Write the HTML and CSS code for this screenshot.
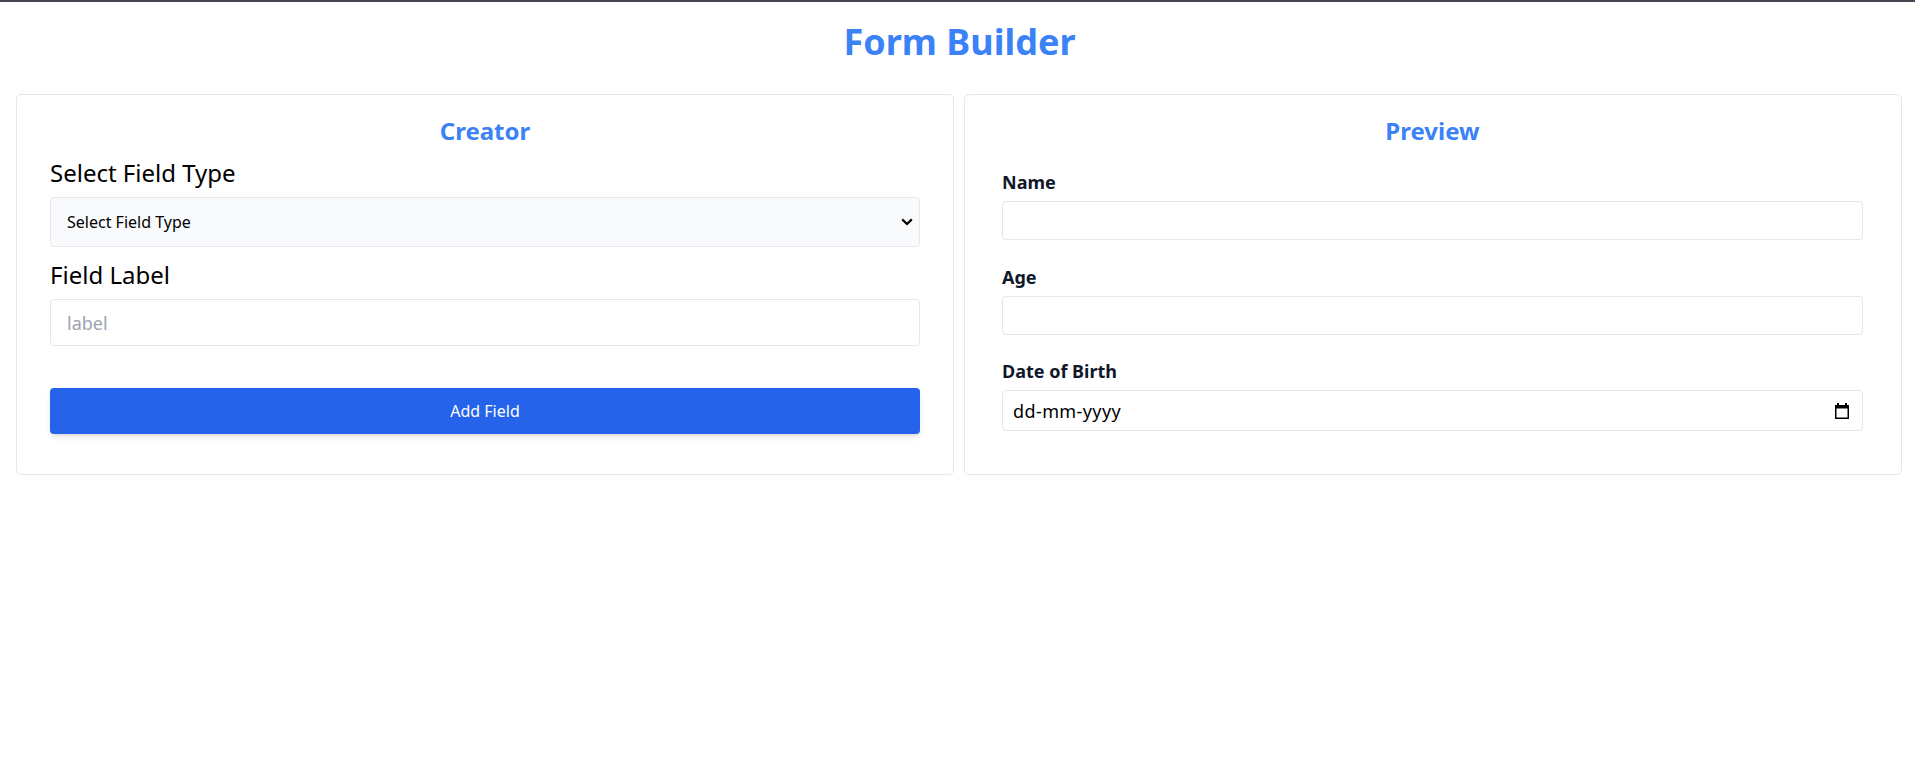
FILE: index.html
```html
<!DOCTYPE html>
<html lang="en">
<head>
<meta charset="utf-8">
<title>Form Builder</title>
<link rel="stylesheet" href="styles.css">
</head>
<body>
<div class="page">
  <h1 class="title">Form Builder</h1>
  <div class="panels">
    <section class="card card-creator">
      <h2 class="card-title">Creator</h2>
      <label class="creator-label" for="ftype">Select Field Type</label>
      <div class="select-wrap">
        <select id="ftype" class="select">
          <option>Select Field Type</option>
          <option>Text</option>
          <option>Number</option>
          <option>Date</option>
        </select>
        <svg class="chevron" width="12" height="8" viewBox="0 0 12 8"><path d="M1.2 1.4 L6 6 L10.8 1.4" fill="none" stroke="#000" stroke-width="2.2"/></svg>
      </div>
      <label class="creator-label" for="flabel">Field Label</label>
      <input id="flabel" class="text-input" type="text" placeholder="label">
      <button class="add-btn" type="button">Add Field</button>
    </section>
    <section class="card card-preview">
      <h2 class="card-title">Preview</h2>
      <div class="preview-list">
        <div class="field">
          <label class="preview-label">Name</label>
          <input class="preview-input" type="text">
        </div>
        <div class="field">
          <label class="preview-label">Age</label>
          <input class="preview-input" type="text">
        </div>
        <div class="field">
          <label class="preview-label">Date of Birth</label>
          <div class="date-field">
            <input class="date-text" type="text" placeholder="dd-mm-yyyy">
            <svg class="cal-icon" width="14" height="16" viewBox="0 0 14 16">
              <rect x="2" y="0" width="2" height="2.5" fill="#000"/>
              <rect x="10" y="0" width="2" height="2.5" fill="#000"/>
              <rect x="0" y="2" width="14" height="3.5" fill="#000"/>
              <rect x="0.75" y="2.75" width="12.5" height="12.5" fill="none" stroke="#000" stroke-width="1.5"/>
            </svg>
          </div>
        </div>
      </div>
    </section>
  </div>
</div>
</body>
</html>
```

FILE: styles.css
```css
* { box-sizing: border-box; }

html, body {
  margin: 0;
  padding: 0;
  background: #ffffff;
}

body {
  font-family: "Noto Sans", "Open Sans", sans-serif;
  color: #000;
}

.page {
  border-top: 2px solid #44474f;
  min-height: 761px;
}

.title {
  margin: 20px 0 32px;
  font-size: 36px;
  line-height: 40px;
  font-weight: 700;
  color: #3b82f6;
  text-align: center;
  padding-left: 4px;
}

.panels {
  display: grid;
  grid-template-columns: 1fr 1fr;
  gap: 10px;
  padding: 0 13px 0 16px;
}

.card {
  border: 1px solid #e5e7eb;
  border-radius: 5px;
  background: #fff;
  display: flex;
  flex-direction: column;
}

.card-creator {
  padding: 20px 33px 39px;
}

.card-preview {
  padding: 20px 38px 20px 37px;
}

.card-title {
  margin: 0 0 10px;
  font-size: 24px;
  line-height: 32px;
  font-weight: 700;
  color: #3b82f6;
  text-align: center;
}

.creator-label {
  display: block;
  font-size: 24px;
  line-height: 32px;
  margin-bottom: 8px;
  color: #000;
}

.select-wrap {
  position: relative;
  margin-bottom: 12px;
}

.select {
  display: block;
  width: 100%;
  height: 50px;
  padding: 0 16px;
  font-family: inherit;
  font-size: 16px;
  color: #000;
  background: #f9fafb;
  border: 1px solid #e5e7eb;
  border-radius: 4px;
  appearance: none;
  -webkit-appearance: none;
  outline: none;
}

.chevron {
  position: absolute;
  right: 7px;
  top: 21px;
  pointer-events: none;
}

.text-input {
  display: block;
  width: 100%;
  height: 47px;
  padding: 0 16px;
  font-family: inherit;
  font-size: 18px;
  color: #000;
  background: #fff;
  border: 1px solid #e5e7eb;
  border-radius: 4px;
  margin-bottom: 42px;
  outline: none;
}

.text-input::placeholder {
  color: #9ca3af;
}

.add-btn {
  display: block;
  width: 100%;
  height: 46px;
  border: none;
  border-radius: 4px;
  background: #2563eb;
  color: #fff;
  font-family: inherit;
  font-size: 16px;
  box-shadow: 0 4px 6px -1px rgba(0,0,0,0.1), 0 2px 4px -2px rgba(0,0,0,0.1);
  cursor: pointer;
}

.preview-list {
  padding-top: 11px;
}

.field {
  margin-bottom: 22.5px;
}

.preview-label {
  display: block;
  font-size: 18px;
  line-height: 28px;
  font-weight: 700;
  color: #0f172a;
  margin-bottom: 5px;
}

.preview-input {
  display: block;
  width: 100%;
  height: 39px;
  padding: 0 10px;
  font-family: inherit;
  font-size: 18px;
  background: #fff;
  border: 1px solid #e5e7eb;
  border-radius: 4px;
  outline: none;
}

.date-field {
  display: flex;
  align-items: center;
  height: 41px;
  padding: 0 13px 0 10px;
  border: 1px solid #e5e7eb;
  border-radius: 4px;
  background: #fff;
}

.date-text {
  flex: 1;
  min-width: 0;
  border: none;
  outline: none;
  padding: 0;
  font-family: inherit;
  font-size: 18px;
  letter-spacing: 0.4px;
  color: #000;
  background: transparent;
}

.date-text::placeholder {
  color: #000;
  opacity: 1;
}

.cal-icon {
  flex: none;
  display: block;
}
```
